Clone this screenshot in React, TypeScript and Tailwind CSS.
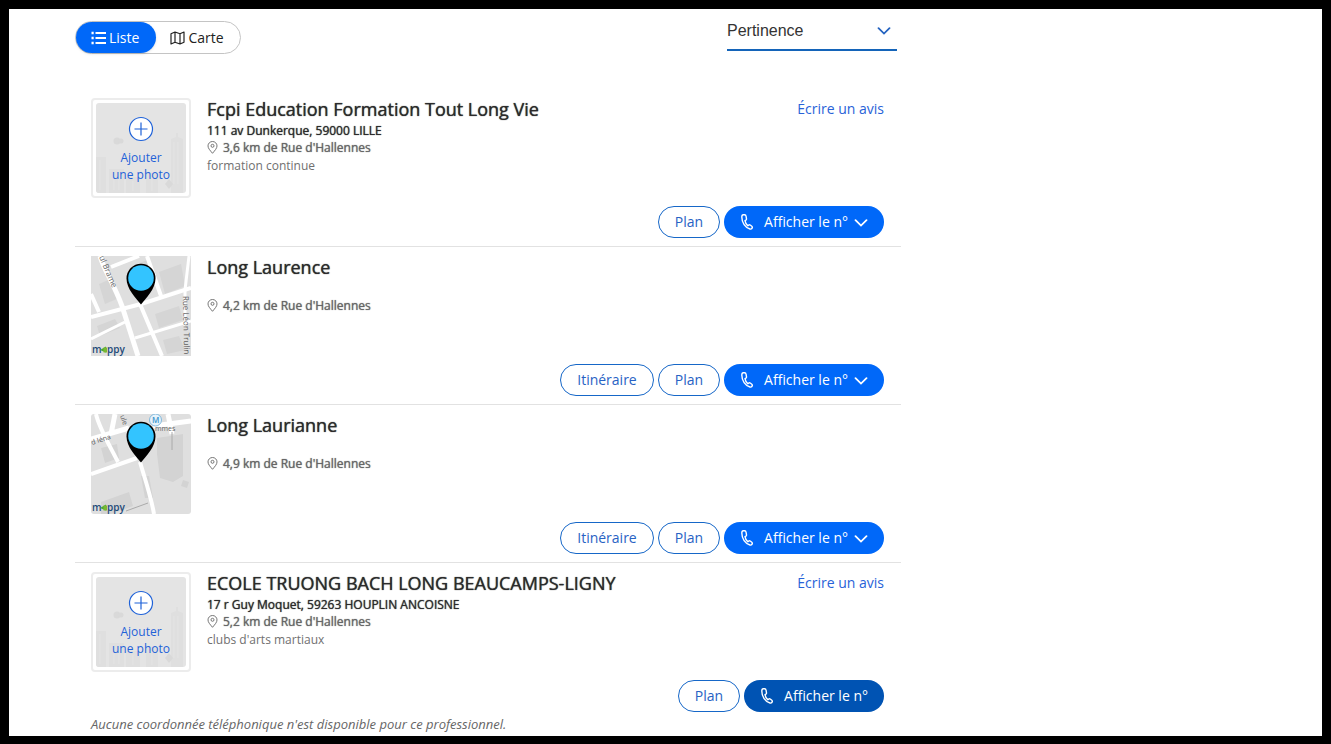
import React, { useState } from 'react';

interface Listing {
  id: string;
  name: string;
  address?: string;
  distance: string;
  activity?: string;
  visual: 'photo' | 'mapLaurence' | 'mapLaurianne';
  canReview?: boolean;
  hasRoute?: boolean;
  noPhone?: boolean;
}

const listings: Listing[] = [
  {
    id: 'fcpi',
    name: 'Fcpi Education Formation Tout Long Vie',
    address: '111 av Dunkerque, 59000 LILLE',
    distance: "3,6 km de Rue d'Hallennes",
    activity: 'formation continue',
    visual: 'photo',
    canReview: true,
  },
  {
    id: 'laurence',
    name: 'Long Laurence',
    distance: "4,2 km de Rue d'Hallennes",
    visual: 'mapLaurence',
    hasRoute: true,
  },
  {
    id: 'laurianne',
    name: 'Long Laurianne',
    distance: "4,9 km de Rue d'Hallennes",
    visual: 'mapLaurianne',
    hasRoute: true,
  },
  {
    id: 'ecole',
    name: 'ECOLE TRUONG BACH LONG BEAUCAMPS-LIGNY',
    address: '17 r Guy Moquet, 59263 HOUPLIN ANCOISNE',
    distance: "5,2 km de Rue d'Hallennes",
    activity: "clubs d'arts martiaux",
    visual: 'photo',
    canReview: true,
    noPhone: true,
  },
];

const ListIcon = () => (
  <svg width="15" height="14" viewBox="0 0 15 14" fill="none" stroke="currentColor" strokeWidth="2" aria-hidden="true">
    <path d="M4.5 2H15M4.5 7H15M4.5 12H15" />
    <path d="M0.500 2h2.200M0.500 7h2.200M0.500 12h2.200" strokeWidth="2.4" />
  </svg>
);

const MapIcon = () => (
  <svg width="15" height="14" viewBox="0 0 15 14" fill="none" stroke="currentColor" strokeWidth="1.2" strokeLinejoin="round" aria-hidden="true">
    <path d="M1 2.800 5 1l5 1.800L14 1v10.200L10 13l-5-1.800L1 13zM5 1v10.200M10 2.800V13" />
  </svg>
);

const Chevron = ({ className }: { className?: string }) => (
  <svg width="14" height="8" viewBox="0 0 14 8" fill="none" stroke="currentColor" strokeWidth="1.8" strokeLinecap="round" className={className} aria-hidden="true">
    <path d="m1.5 1.2 5.5 5.4 5.5-5.4" />
  </svg>
);

const PhoneIcon = () => (
  <svg width="14" height="16" viewBox="-1 0 14 16" fill="none" stroke="currentColor" strokeWidth="1.400" strokeLinejoin="round" strokeLinecap="round" aria-hidden="true">
    <path d="M3.600.8H2.300C1.200.8.8 1.600.8 3 .8 8.500 4.200 13.600 9 15c1.100.3 2-.2 2.300-1.200.2-.8 0-1.200-.5-1.600l-1.600-1.200c-.5-.3-1-.3-1.500.1l-.9.7C5.300 10.400 4.300 8.600 4 6.600l.9-.5c.5-.3.7-.8.6-1.300L5 1.900C4.900 1.200 4.400.8 3.600.8z" />
  </svg>
);

const MarkerIcon = () => (
  <svg width="11" height="13" viewBox="0 0 11 13" fill="none" stroke="currentColor" strokeWidth="0.9" aria-hidden="true">
    <path d="M5.500 12.300C3 9.300 1 7.300 1 4.900a4.500 4.400 0 0 1 9 0c0 2.400-2 4.400-4.500 7.400z" />
    <circle cx="5.500" cy="4.800" r="1.500" />
  </svg>
);

const Pin = () => (
  <>
    <path d="M50 48.500C45 42 35.500 33 35.500 22.500a14.500 14.800 0 0 1 29 0C64.500 33 55 42 50 48.500z" fill="#000" />
    <circle cx="50" cy="22" r="12.800" fill="#33c4ff" />
  </>
);

const MappyLogo = () => (
  <g fontFamily="Open Sans, sans-serif" fontSize="10" fontWeight="600" fill="#1d4a78">
    <text x="1" y="96.500">m</text>
    <text x="16" y="96.500">ppy</text>
    <path d="m9 94 6-3.500v6z" fill="#4aa832" />
    <path d="M12.500 91.500H16v5h-3.500z" fill="#79b832" />
  </g>
);

const MapLaurence = () => (
  <svg width="100" height="100" viewBox="0 0 100 100" role="img" aria-label="Plan">
    <rect width="100" height="100" fill="#dfdfdf" />
    <g fill="#d5d5d5">
      <path d="m8 28 14-6 6 20-14 6zM38 12l18-8 4 6-20 10zM68 16l22-8 4 22-20 8zM64 58l24-8 4 14-24 8zM6 70l18-7 5 9-20 8zM72 84l16-4 6 14-18 4z" />
    </g>
    <g stroke="#fff" fill="none">
      <path d="M9 0c4 14 14 28 22 50l16 50" strokeWidth="5" />
      <path d="M0 61 50 48l50-16" strokeWidth="4" />
      <path d="M20 11 48 0M0 38l8 18M56 0l14 40M49 48l22 52" strokeWidth="4" />
      <path d="m0 83 34-17M44 82l56-17M98 0l-4 34v36" strokeWidth="3" />
    </g>
    <g fill="#606060" fontFamily="Open Sans, sans-serif" fontSize="8">
      <text transform="translate(8 1) rotate(67)">ul Brame</text>
      <text transform="translate(92 40) rotate(89)">Rue Léon Trulin</text>
    </g>
    <MappyLogo />
    <Pin />
  </svg>
);

const MapLaurianne = () => (
  <svg width="100" height="100" viewBox="0 0 100 100" className="rounded-[3px]" role="img" aria-label="Plan">
    <rect width="100" height="100" fill="#dfdfdf" />
    <g fill="#d3d3d3">
      <path d="m66 24 26-4v42l-10 6-13-4-3-24zM10 34l16-4 2 14-14 5zM50 62h8l4 22h-8zM10 88l28-10 4 14-22 8H10zM92 66l6 2-2 6-6-2z" />
    </g>
    <g stroke="#fff" fill="none">
      <path d="M5 0c3 14 14 32 22 48M0 60l46-16M49 48c4 14 11 34 14 52" strokeWidth="4" />
      <path d="M0 25 38 14M62 12l38-5M24 0l-4 20M77 0l4 20" strokeWidth="5" />
    </g>
    <path d="M81 18v18M35 97l22-8" stroke="#aaa" fill="none" />
    <g fill="#606060" fontFamily="Open Sans, sans-serif" fontSize="7">
      <text transform="translate(1 31) rotate(-18)">d Iéna</text>
      <text transform="translate(29 2) rotate(70)">ule</text>
      <text x="64" y="17">mmes</text>
    </g>
    <circle cx="64.500" cy="6" r="6" fill="#e7f3fb" stroke="#82b9dd" />
    <text x="61" y="9" fontFamily="Open Sans, sans-serif" fontSize="8" fontWeight="600" fill="#3a93cc">M</text>
    <MappyLogo />
    <Pin />
  </svg>
);

const AddPhoto = () => (
  <button type="button" className="grid size-[100px] rounded border-2 border-[#ececec] bg-white p-[3px] text-xs text-[#1f62d8]">
    <svg width="90" height="90" viewBox="0 0 90 90" className="col-start-1 row-start-1 rounded-[3px]" aria-hidden="true">
      <rect width="90" height="90" fill="#e4e4e4" />
      <g fill="#dfdfdf">
        <path d="M75 43V36l5-2v-4h2v4l5 2v54H75zM0 54h10v36H0zM13 66h15v24H13zM30 74h14v16H30zM50 70h12v20H50z" />
      </g>
      <g fill="#d9d9d9">
        <circle cx="21" cy="38" r="3.500" />
        <circle cx="25" cy="38" r="2.500" />
        <path d="m73 76 4 5-4 5-4-5z" />
      </g>
      <path d="M78 39v42M82 39v42M4 57v30M18 69v18M23 69v18M37 78v10M56 74v14" stroke="#e4e4e4" />
    </svg>
    <span className="col-start-1 row-start-1 flex flex-col items-center pt-[13px]">
      <svg width="26" height="26" viewBox="0 0 26 26" fill="none" stroke="currentColor" strokeWidth="1.2" aria-hidden="true">
        <circle cx="13" cy="13" r="11.500" fill="#fff" />
        <path d="M13 6.500v13M6.500 13h13" />
      </svg>
      <span className="mt-[7px] leading-[17px]">
        Ajouter
        <br />
        une photo
      </span>
    </span>
  </button>
);

const outlineButton = 'h-8 rounded-full border border-[#1667c8] bg-white px-4 text-sm text-[#2862c4]';

const ListingCard = ({ listing }: { listing: Listing }) => (
  <li className="border-b border-[#e2e2e2] pt-[9px] pr-[17px] pb-2 pl-4 last:border-b-0 last:pb-0">
    <div className="flex gap-4">
      <div className="size-[100px] shrink-0">
        {listing.visual === 'photo' && <AddPhoto />}
        {listing.visual === 'mapLaurence' && <MapLaurence />}
        {listing.visual === 'mapLaurianne' && <MapLaurianne />}
      </div>
      <div className="min-w-0 flex-1 text-xs leading-[17px]">
        <h2 className="mb-0.5 text-lg leading-[22px] text-[#2b2b2b] [text-shadow:0_0_1px_currentColor]">{listing.name}</h2>
        <p className="min-h-[17px] text-[#2b2b2b] [text-shadow:0_0_1px_currentColor]">{listing.address}</p>
        <p className="flex items-center gap-[5px] text-[#666] [text-shadow:0_0_1px_currentColor]">
          <MarkerIcon />
          {listing.distance}
        </p>
        {listing.activity && <p className="mt-px text-[#707070]">{listing.activity}</p>}
      </div>
      {listing.canReview && (
        <a href="#avis" className="h-[22px] text-sm leading-[22px] text-[#2862d8]">
          Écrire un avis
        </a>
      )}
    </div>

    <div className="mt-2 flex justify-end gap-1">
      {listing.hasRoute && (
        <button type="button" className={outlineButton}>Itinéraire</button>
      )}
      <button type="button" className={outlineButton}>Plan</button>
      <button
        type="button"
        className={`flex h-8 items-center rounded-full px-4 text-sm text-white ${listing.noPhone ? 'bg-[#0053b3]' : 'bg-[#0068f9]'}`}
      >
        <PhoneIcon />
        <span className="ml-[10px]">Afficher le n°</span>
        {!listing.noPhone && <Chevron className="mt-0.5 ml-[6px]" />}
      </button>
    </div>

    {listing.noPhone && (
      <p className="mt-1 text-[13px] leading-4 text-[#666] italic">
        Aucune coordonnée téléphonique n'est disponible pour ce professionnel.
      </p>
    )}
  </li>
);

export default function App() {
  const [view, setView] = useState<'liste' | 'carte'>('liste');

  return (
    <div className="h-screen overflow-hidden border-[9px] border-b-8 border-black bg-white font-['Open_Sans',sans-serif]">
      <main className="ml-[66px] max-w-[826px]">
        <div className="flex items-start justify-between pt-3 pr-1">
          <div className="flex h-[33px] rounded-full border border-[#c4c4c4] text-sm">
            <button
              type="button"
              aria-pressed={view === 'liste'}
              onClick={() => setView('liste')}
              className="flex items-center gap-[3px] rounded-full bg-[#0068f9] pr-[17px] pl-[15px] text-white shadow-sm"
            >
              <ListIcon />
              Liste
            </button>
            <button
              type="button"
              aria-pressed={view === 'carte'}
              onClick={() => setView('carte')}
              className="flex items-center gap-[3px] rounded-full pr-4 pl-[14px] text-[#222]"
            >
              <MapIcon />
              Carte
            </button>
          </div>

          <div className="relative h-[30px] w-[170px] border-b-2 border-[#1464b9]">
            <select
              aria-label="Trier par"
              className="block w-full appearance-none bg-transparent font-['Liberation_Sans',sans-serif] text-base leading-5 text-[#333]"
            >
              <option>Pertinence</option>
              <option>Distance</option>
            </select>
            <Chevron className="pointer-events-none absolute top-[6px] right-[6px] text-[#2463c0]" />
          </div>
        </div>

        <ul className="mt-[35px]">
          {listings.map((listing) => (
            <ListingCard key={listing.id} listing={listing} />
          ))}
        </ul>
      </main>
    </div>
  );
}
